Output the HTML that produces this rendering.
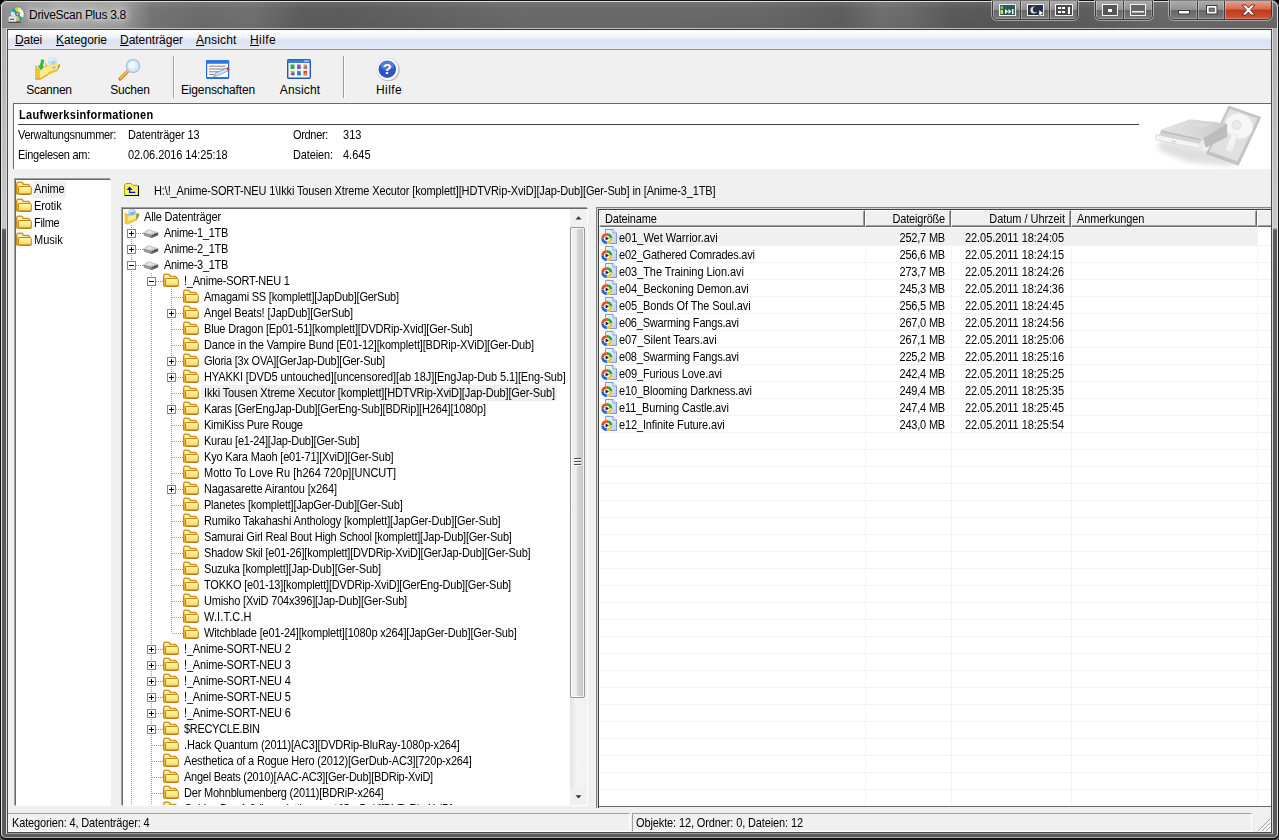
<!DOCTYPE html>
<html lang="de">
<head>
<meta charset="utf-8">
<title>DriveScan Plus 3.8</title>
<style>
*{box-sizing:border-box;margin:0;padding:0}
html,body{width:1279px;height:840px;overflow:hidden;background:#000}
body{font-family:"Liberation Sans",sans-serif;font-size:11px;color:#000;position:relative}
#win{position:absolute;left:0;top:0;width:1279px;height:840px;overflow:hidden;background:#5a5a5a;border-radius:7px 7px 0 0}
/* ---- glass frame ---- */
#glass{position:absolute;left:0;top:0;width:1279px;height:840px;border-radius:7px 7px 6px 6px;
 background:
 linear-gradient(to bottom,#b0b0b0 0,#c8c8c8 228px,#5c5c5c 230px,#5a5a5a 800px,#5c5c5c 840px)}
#titlebg{position:absolute;left:2px;top:2px;width:1275px;height:26px;
 background:linear-gradient(to right,#8e8e8e 0,#999 22px,#a6a6a6 60px,#a0a0a0 118px,#8a8a8a 134px,#757575 150px,#6c6c6c 200px,#707070 250px,#5d5d5d 300px,#5c5c5c 340px,#626262 420px,#6a6a6a 520px,#6a6a6a 640px,#676767 760px,#5e5e5e 840px,#6f6f6f 878px,#6b6b6b 905px,#5a5a5a 950px,#585858 1000px,#5e5e5e 1100px,#696969 1160px,#686868 1275px)}
#titleshade{position:absolute;left:2px;top:2px;width:1275px;height:26px;background:linear-gradient(to bottom,rgba(255,255,255,.08) 0,rgba(255,255,255,0) 30%,rgba(0,0,0,.03) 100%)}
#frameo{position:absolute;left:0;top:0;width:1279px;height:840px;border:1px solid #141414;border-bottom-width:2px;border-radius:7px 7px 6px 6px}
#framei{position:absolute;left:1px;top:1px;width:1277px;height:837px;border:1px solid #e2e2e2;border-top-color:#dcdcdc;border-bottom-color:#a8a8a8;border-radius:6px 6px 5px 5px}
#clientb{position:absolute;left:6px;top:28px;width:1267px;height:806px;border:1px solid #dadada;border-top-color:#c2c2c2;border-bottom-color:#9a9a9a}
#clientb2{position:absolute;left:7px;top:29px;width:1265px;height:804px;border:1px solid #4a4a4a;border-top-color:#343434}
#title{position:absolute;left:29px;top:7px;font-size:12px;line-height:16px;white-space:nowrap;color:#000;text-shadow:0 0 5px rgba(255,255,255,.9),0 0 9px rgba(255,255,255,.8),0 0 13px rgba(255,255,255,.6)}
#appicon{position:absolute;left:8px;top:6px}
/* caption button groups */
.cg{position:absolute;top:1px;height:19px;border:1px solid #3c3c3c;border-top:0;border-radius:0 0 5px 5px;overflow:hidden;box-shadow:0 0 0 1px rgba(255,255,255,.45)}
.cb{position:absolute;top:0;height:18px;border-right:1px solid #3c3c3c;background:linear-gradient(to bottom,#adadad 0,#909090 48%,#686868 52%,#7a7a7a 100%);box-shadow:inset 1px 0 0 rgba(255,255,255,.35),inset -1px -1px 0 rgba(255,255,255,.25)}
.cb.close{background:linear-gradient(to bottom,#e6a390 0,#d4694f 45%,#c0391c 50%,#d2553a 100%);border-right:0}
.cb svg{position:absolute;left:0;top:0}
/* ---- client ---- */
#client{position:absolute;left:8px;top:30px;width:1263px;height:802px;background:#f0f0f0;overflow:hidden}
#menubar{position:absolute;left:0;top:0;width:1263px;height:20px;background:linear-gradient(to bottom,#fdfdfe 0,#f3f5fb 35%,#dde3f3 55%,#dfe5f4 85%,#e9edf8 100%);border-bottom:1px solid #b6bccc}
#menubar:after{content:"";position:absolute;left:0;top:19px;width:100%;height:1px;background:#8e8e8e}
.mi{position:absolute;top:2px;font-size:12px;line-height:16px;white-space:nowrap}
.mi u{text-decoration:underline;text-underline-offset:1px}
#toolbar{position:absolute;left:0;top:20px;width:1263px;height:54px}
.tb{position:absolute;top:0;height:50px;text-align:center;font-size:12px;white-space:nowrap}
.tb span{position:absolute;left:-19px;right:-21px;top:33px;line-height:14px;text-align:center}
.tb svg{position:absolute;top:8px;left:50%;margin-left:-12px}
.tsep{position:absolute;top:26px;width:2px;height:42px;border-left:1px solid #a0a0a0;border-right:1px solid #fff}
/* info panel */
#info{position:absolute;left:5px;top:73px;width:1258px;height:66px;background:#fff;border-top:1px solid #696969;border-left:1px solid #696969}
#info h1{position:absolute;left:5px;top:4px;font-size:11px;font-weight:bold;line-height:14px;white-space:nowrap;transform:scaleY(1.1);transform-origin:0 10.600px}
#info .ln{position:absolute;left:4px;top:20px;width:1121px;height:1px;background:#404040}
.il{position:absolute;white-space:nowrap;line-height:14px;transform:scaleY(1.1);transform-origin:0 10.600px}
/* category list */
#cats{position:absolute;left:7px;top:149px;width:96px;height:627px;background:#fff;border:1px solid;border-color:#696969 #fff #fff #696969;box-shadow:-1px -1px 0 #a0a0a0}
.cat{position:absolute;left:0;height:17px;width:95px}
.cat span{position:absolute;left:17px;top:1px;line-height:14px;white-space:nowrap;padding:0 2px 0 1px;transform:scaleY(1.1);transform-origin:0 10.600px}
.cat.sel:before{content:"";position:absolute;left:17px;top:0;width:33px;height:17px;background:#f0f0f0}
.ic{position:absolute}
/* path bar */
#pathicon{position:absolute;left:116px;top:151px}
#path{position:absolute;left:146px;top:154px;line-height:14px;white-space:nowrap;transform:scaleY(1.1);transform-origin:0 10.600px}
/* tree */
#tree{position:absolute;left:114px;top:178px;width:466px;height:598px;background:#fff;border:1px solid;border-color:#696969 #fff #fff #696969;box-shadow:-1px -1px 0 #a0a0a0}
#treein{position:absolute;left:0;top:0;width:447px;height:596px;overflow:hidden}
.tl{position:absolute;line-height:14px;padding:1px 2px 1px 1px;white-space:nowrap;margin-left:-1px;transform:scaleY(1.1);transform-origin:0 11.600px}
.selbg{position:absolute;height:16px;background:#f0f0f0}
.dv{position:absolute;width:1px;background:repeating-linear-gradient(to bottom,#9a9a9a 0,#9a9a9a 1px,transparent 1px,transparent 2px)}
.dh{position:absolute;height:1px;background:repeating-linear-gradient(to right,#9a9a9a 0,#9a9a9a 1px,transparent 1px,transparent 2px)}
.pm{position:absolute;width:9px;height:9px;border:1px solid #848484;background:#fff}
.pm .ph{position:absolute;left:1px;top:3px;width:5px;height:1px;background:#000}
.pm .pv{position:absolute;left:3px;top:1px;width:1px;height:5px;background:#000}
/* scrollbar */
#sb{position:absolute;left:447px;top:0;width:17px;height:596px;background:#f0f0f0}
#sb .trk{position:absolute;left:0;top:17px;width:17px;height:562px;background:linear-gradient(to right,#e3e3e3,#f4f4f4 40%,#f0f0f0)}
#sb .thumb{position:absolute;left:0;top:18px;width:15px;height:471px;border:1px solid #979797;border-radius:2px;background:linear-gradient(to right,#f3f3f3 0,#ebebeb 42%,#d6d6d6 50%,#c6c6c6 100%);box-shadow:inset 0 0 0 1px rgba(255,255,255,.8)}
#sb svg{position:absolute;left:0}
/* file list */
#list{position:absolute;left:588px;top:177px;width:690px;height:601px;overflow:hidden;background:
 linear-gradient(#828282,#828282) 0 0/100% 1px no-repeat,
 linear-gradient(#828282,#828282) 0 0/1px 100% no-repeat,
 linear-gradient(#d4d4d4,#d4d4d4) 1px 1px/100% 1px no-repeat,
 linear-gradient(#d4d4d4,#d4d4d4) 1px 1px/1px 100% no-repeat,
 linear-gradient(#404040,#404040) 2px 2px/100% 1px no-repeat,
 linear-gradient(#404040,#404040) 2px 2px/1px 100% no-repeat,
 linear-gradient(#6a6a6a,#6a6a6a) 2px 599px/100% 1px no-repeat,
 linear-gradient(#f0f0f0,#f0f0f0) 0 600px/100% 1px no-repeat,
 #fff}
#lhead{position:absolute;left:3px;top:3px;width:686px;height:17px;background:#f0f0f0}
.hc{position:absolute;top:0;height:17px;background:#f0f0f0;border:1px solid;border-color:#fff #696969 #696969 #fff;box-shadow:inset -1px -1px 0 #a0a0a0;line-height:14px;padding:1px 5px 0 5px;white-space:nowrap}
.hc span,.sp span{display:inline-block;line-height:14px;transform:scaleY(1.1);transform-origin:0 10.600px}
.hc.r{text-align:right}
#rows{position:absolute;left:3px;top:22px;width:686px;height:577px;
 background:
 linear-gradient(#f2f2f2,#f2f2f2) 266px 0/1px 100% no-repeat,
 linear-gradient(#f2f2f2,#f2f2f2) 352px 0/1px 100% no-repeat,
 linear-gradient(#f2f2f2,#f2f2f2) 472px 0/1px 100% no-repeat,
 linear-gradient(#f2f2f2,#f2f2f2) 658px 0/1px 100% no-repeat,
 repeating-linear-gradient(to bottom,transparent 0,transparent 16px,#f2f2f2 16px,#f2f2f2 17px)}
.fr{position:absolute;left:0;width:658px;height:16px}
.fr.first{background:#f0f0f0;box-shadow:0 -1px 0 #f0f0f0}
.fr span{position:absolute;top:2px;line-height:14px;white-space:nowrap;transform:scaleY(1.1);transform-origin:0 10.600px}
.fn{left:20px}
.fs{right:312px;text-align:right}
.fd{right:193px;text-align:right}
/* status bar */
#status{position:absolute;left:0;top:783px;width:1263px;height:19px;background:#f0f0f0}
.sp{position:absolute;top:0;height:19px;border:1px solid;border-color:#a0a0a0 #fff #fff #a0a0a0;line-height:14px;padding:2px 0 0 3px;white-space:nowrap}
</style>
</head>
<body>
<svg width="0" height="0" style="position:absolute">
<defs>
<linearGradient id="fg" x1="0" y1="0" x2="0" y2="1"><stop offset="0" stop-color="#fffbb0"/><stop offset="1" stop-color="#f9d260"/></linearGradient>
<linearGradient id="pg" x1="0" y1="0" x2="1" y2="1"><stop offset="0" stop-color="#f4f8ff"/><stop offset="1" stop-color="#b7cdf3"/></linearGradient>
<linearGradient id="fb" x1="0" y1="0" x2="0" y2="1"><stop offset="0" stop-color="#f7d66a"/><stop offset="1" stop-color="#e9b838"/></linearGradient>
<g id="folder">
<path d="M.6 13.100V2.400c0-.8.5-1.300 1.200-1.300h4c.5 0 .8.200 1 .6l.6 1.600h5c.7 0 1.100.4 1.100 1.100v8.700z" fill="#f1b93a" stroke="#bd820c"/>
<path d="M1.600 5V2.700c0-.4.200-.6.600-.6h3.300l.9 2.200h5.500c.3 0 .5.200.5.500V5z" fill="#fdf1bd"/>
<rect x="2.600" y="5.500" width="12.700" height="7.700" rx="1" fill="url(#fg)" stroke="#c2860e"/>
<path d="M3.400 13.200h11c.6 0 .9-.4.900-1" fill="none" stroke="#9c6c0c" stroke-width=".8"/>
</g>
<g id="drive">
<path d="M.3 7.800L5.800 4.600 15.200 7.600 15 10.300 8.400 12.900 1.200 10.400z" fill="#8c8c8c"/>
<path d="M.3 7.800L5.800 4.600 15.200 7.600 8.600 10.100z" fill="#cfcfcf"/>
<path d="M3 7.400L6.200 5.600 10 6.800 6.800 8.400z" fill="#e9e9e9"/>
<path d="M.3 7.800L8.600 10.100 8.400 12.900 1.200 10.400z" fill="#9a9a9a"/>
<path d="M8.600 10.100L15.200 7.600 15 10.300 8.400 12.900z" fill="#5f5f66"/>
<ellipse cx="12.600" cy="9.600" rx="1.500" ry="1" fill="#4a4a78"/>
</g>
<g id="avi">
<path d="M4.500 .5h7.500l3.500 3.500v10.500h-11z" fill="url(#pg)" stroke="#7f9bd6"/>
<path d="M12 .5v3.500h3.500" fill="#fff" stroke="#7f9bd6"/>
<circle cx="5.800" cy="9.500" r="5.600" fill="#fff"/>
<path d="M5.800 3.900a5.600 5.600 0 0 1 5.600 5.600h-3A2.600 2.600 0 0 0 5.800 6.900z" fill="#35a12e"/>
<path d="M11.400 9.500a5.600 5.600 0 0 1-5.600 5.600v-3a2.600 2.600 0 0 0 2.600-2.600z" fill="#f5cb08"/>
<path d="M5.800 15.100A5.600 5.600 0 0 1 .2 9.500h3a2.600 2.600 0 0 0 2.600 2.600z" fill="#1f66dc"/>
<path d="M.2 9.500a5.600 5.600 0 0 1 5.600-5.600v3a2.600 2.600 0 0 0-2.600 2.600z" fill="#ee4a14"/>
<circle cx="5.800" cy="9.500" r="2.700" fill="#eef2fb"/>
<path d="M4.600 7.500l3.400 2-3.400 2z" fill="#1a1a2a"/>
</g>
<g id="rooticon">
<path d="M.7 3.200L4 5.500 12.500 4 15.200 4.800 14 8.500 12.300 11.600 3.600 15.600.9 14.400z" fill="#e9b92c"/>
<circle cx="8.200" cy="4.200" r="4.100" fill="#9cd2f8"/><circle cx="8.600" cy="4.800" r="2.300" fill="#6ab6f2"/><path d="M5 3.500c1-2 4-2.500 5.500-1.200-1.800.2-3.500.6-5.500 1.200z" fill="#eef8ff"/>
<path d="M.7 3.200L3.600 6.500 3.600 15.600.9 14.400z" fill="#f2c63a"/>
<path d="M3.600 7.600L12.500 5.300 12.300 11.600 3.600 15.600z" fill="#fdf08a"/>
<path d="M3.600 12.500L12.300 9 12.300 11.600 3.600 15.600z" fill="#f2cb44"/>
<path d="M12.500 5.300L15.200 4.800 14 8.500 12.300 11.600z" fill="#8f8442"/>
</g>
</defs>
</svg>
<div id="win">
 <div id="glass"></div>
 <div id="titlebg"></div>
 <div id="titleshade"></div>
 <div id="frameo"></div>
 <div id="framei"></div>
 <div id="clientb"></div>
 <div id="clientb2"></div>
 <svg id="appicon" width="17" height="18" viewBox="0 0 17 18">
  <circle cx="9.500" cy="8" r="6.800" fill="#f1f3ea" stroke="#6e6e6a" stroke-width=".8"/>
  <path d="M9.500 8L3.200 5.500A6.800 6.800 0 0 1 7 1.700z" fill="#2aa6a6"/>
  <path d="M9.500 8L7 1.700a6.800 6.800 0 0 1 3.600-.4z" fill="#b6e34a"/>
  <path d="M9.500 8l1.100-6.700a6.800 6.800 0 0 1 2.500 1z" fill="#f2ea9a"/>
  <path d="M9.500 8l5.500 4a6.800 6.800 0 0 1-3.500 2.500z" fill="#23a89a"/>
  <path d="M9.500 8l2 6.500a6.800 6.800 0 0 1-2.700.3z" fill="#f0b630"/>
  <path d="M9.500 8L3.200 5.500a6.800 6.800 0 0 0-.3 4z" fill="#c9eef0"/>
  <circle cx="9.500" cy="8" r="2" fill="#a9b0a8" stroke="#4d5a52" stroke-width=".9"/>
  <path d="M.5 16.300V11.500l1.500-1.500h5.500l1 1.800v4.500z" fill="#e4ece2" stroke="#9aa39a" stroke-width=".5"/>
  <rect x="1.800" y="12.800" width="4.500" height="1" fill="#3c463c"/>
  <rect x=".3" y="15.800" width="12.500" height="1" fill="#33363a"/>
 </svg>
 <div id="title" style="letter-spacing:-0.28px">DriveScan Plus 3.8</div>

 <div class="cg" style="left:992px;width:86px">
  <div class="cb" style="left:0;width:28px"><svg width="28" height="19"><rect x="6.500" y="3.500" width="16" height="11" fill="#2d5a5a" stroke="#f4f4f4"/><rect x="7.500" y="5" width="2.500" height="3" fill="#6cc070"/><rect x="7.500" y="9" width="2.500" height="4" fill="#e0d850"/><path d="M12 8l3 2.500-3 2.500zM15.500 8l3 2.500-3 2.500zM19 8v5h1.500V8z" fill="#fff"/></svg></div>
  <div class="cb" style="left:28px;width:29px"><svg width="29" height="19"><rect x="6.500" y="3.500" width="16" height="11" fill="#23314a" stroke="#f4f4f4"/><circle cx="13" cy="9" r="3.600" fill="#e6e2c0"/><circle cx="14.800" cy="8.600" r="3" fill="#23314a"/><path d="M18 9l4.500 3-4.500 3z" fill="#fff" stroke="#444" stroke-width=".5"/></svg></div>
  <div class="cb" style="left:57px;width:28px;border-right:0"><svg width="28" height="19"><rect x="5.500" y="3.500" width="17" height="11" fill="#4a4a4a" stroke="#f4f4f4"/><rect x="8" y="6" width="3" height="2" fill="#fff"/><rect x="12" y="6" width="3" height="2" fill="#fff"/><rect x="8" y="10" width="3" height="2" fill="#fff"/><rect x="12" y="10" width="3" height="2" fill="#fff"/><path d="M18 6h2v7h-2z" fill="#fff"/></svg></div>
 </div>
 <div class="cg" style="left:1095px;width:58px">
  <div class="cb" style="left:0;width:28px"><svg width="28" height="19"><rect x="6.500" y="3.500" width="15" height="11" fill="#555" stroke="#f4f4f4"/><rect x="12" y="8" width="4" height="3" fill="#fff"/></svg></div>
  <div class="cb" style="left:28px;width:28px;border-right:0"><svg width="28" height="19"><rect x="6.500" y="3.500" width="15" height="11" fill="#666" stroke="#f4f4f4"/><rect x="8" y="10" width="12" height="1.500" fill="#f4f4f4"/></svg></div>
 </div>
 <div class="cg" style="left:1169px;width:103px">
  <div class="cb" style="left:0;width:28px"><svg width="28" height="19"><rect x="8.500" y="9.500" width="11" height="3.500" fill="#fff" stroke="#3a3a3a" stroke-width="1"/></svg></div>
  <div class="cb" style="left:28px;width:27px"><svg width="27" height="19"><rect x="8.500" y="4.500" width="10.500" height="8.500" fill="#fff" stroke="#3a3a3a"/><rect x="11" y="7" width="5.500" height="3.500" fill="#777" stroke="#3a3a3a" stroke-width=".6"/></svg></div>
  <div class="cb close" style="left:55px;width:47px"><svg width="47" height="19"><path d="M17 5h4l2.500 3 2.500-3h4l-4.500 5 4.500 5h-4l-2.500-3-2.500 3h-4l4.500-5z" fill="#fff" stroke="#5a2a20" stroke-width=".9" transform="translate(0 -1)"/></svg></div>
 </div>

 <div id="client">
  <div id="menubar">
   <span class="mi" style="letter-spacing:-0.203px;left:7px"><u>D</u>atei</span>
   <span class="mi" style="letter-spacing:-0.042px;left:48px"><u>K</u>ategorie</span>
   <span class="mi" style="letter-spacing:-0.034px;left:112px"><u>D</u>atenträger</span>
   <span class="mi" style="letter-spacing:0.163px;left:188px"><u>A</u>nsicht</span>
   <span class="mi" style="letter-spacing:0.397px;left:242px"><u>H</u>ilfe</span>
  </div>
  <div id="toolbar">
   <div class="tb" style="left:16px;width:48px"><svg width="26" height="24" viewBox="35 57 26 24" style="margin-left:-13px;top:7px">
     <circle cx="52.600" cy="61.800" r="4.500" fill="#c2e0f7"/><path d="M49 61c1-2.500 4.500-3.500 6.500-1.500-2 .3-4.200.8-6.500 1.500z" fill="#f0f8ff"/><circle cx="53.500" cy="62.800" r="1.800" fill="#a4cdf2"/>
     <path d="M45 62L47.500 65.200 59 64 60 65.500 57 71.200 48 74.800 45 71.800z" fill="#efc636"/>
     <path d="M47.500 65.200L59 64 57 71.200 48 74.800z" fill="#fbe880"/>
     <path d="M47.800 72.300L57.600 69 57 71.200 48 74.800z" fill="#eec43c"/>
     <path d="M59 64L60 65.500 57 71.200z" fill="#8c8040"/>
     <ellipse cx="54" cy="67.500" rx="1.700" ry="1.300" fill="#a9b6f2"/>
     <path d="M35 64.500L40.300 70 40.300 79.700 35 79.500z" fill="#efc434"/>
     <path d="M40.300 70L47.800 66.200 48.200 75.200 40.300 79.700z" fill="#fcec90"/>
     <path d="M35 78L40.300 78.200 48.200 73.600 48.200 75.200 40.300 79.700 35 79.500z" fill="#d9aa2a"/>
     <path d="M41.600 59.500L44 60.300 42.600 66.500 44.200 66.900 40.600 70 38.200 65.500 40 66z" fill="#36c024" stroke="#219a16" stroke-width=".4"/>
   </svg><span style="letter-spacing:-0.268px">Scannen</span></div>
   <div class="tb" style="left:97px;width:48px"><svg width="24" height="24" viewBox="0 0 24 24">
     <path d="M3 21l9-9" stroke="#d98a2c" stroke-width="3.400" stroke-linecap="round"/><path d="M3.500 20l8-8" stroke="#f7c46c" stroke-width="1.200" stroke-linecap="round"/>
     <circle cx="16" cy="8" r="6.500" fill="#d7ecfb" stroke="#a9c9e6" stroke-width="1.600"/><circle cx="15" cy="7" r="3.500" fill="#f1f9ff"/>
   </svg><span style="letter-spacing:-0.201px">Suchen</span></div>
   <div class="tb" style="left:185px;width:48px"><svg width="25" height="24" viewBox="0 0 25 24">
     <rect x="1.600" y="2.800" width="22" height="17.600" rx=".8" fill="#fff" stroke="#1f68d8" stroke-width="1.200"/><rect x="1" y="2.200" width="23.200" height="3.600" rx=".8" fill="#2a74e4"/><rect x="1.600" y="19" width="22" height="1.600" fill="#2a74e4"/>
     <path d="M4 8.200h16.500M4 11h16.500M4 13.800h12M4 16.400h5" stroke="#707070" stroke-width=".9"/>
     <path d="M8.500 18.600l2.200-3.600 11-5 2 2.600-11 5z" fill="#cfe2fa" stroke="#5b86c4" stroke-width=".7"/><path d="M21 10.300l1.800-1 2 2.600-1.500 1z" fill="#e8301c"/><path d="M8.500 18.600l3-.5-1.400-2.200z" fill="#f0a428"/>
   </svg><span style="letter-spacing:-0.159px">Eigenschaften</span></div>
   <div class="tb" style="left:267px;width:48px"><svg width="24" height="24" viewBox="0 0 24 24">
     <rect x=".7" y="1.700" width="22.600" height="18.600" rx="1" fill="#f4f7fd" stroke="#2656b0" stroke-width="1.400"/><rect x=".7" y="1.700" width="22.600" height="3.300" fill="#3a78dc"/><rect x="17" y="2.300" width="5" height="1.600" fill="#9cc0f4"/>
     <rect x="3.500" y="6.500" width="4" height="4.500" fill="#3aa83a"/><rect x="10" y="6.500" width="3.600" height="4.500" fill="#d8503a"/><rect x="11" y="8" width="2.600" height="3" fill="#7a58c8"/><rect x="16.500" y="6.500" width="3.600" height="4.500" fill="#e8982c"/><rect x="17.500" y="8.500" width="2.600" height="2.500" fill="#8a68c8"/>
     <rect x="3.500" y="12.800" width="4" height="4.500" fill="#f0b428"/><rect x="4.500" y="14.500" width="3" height="2.800" fill="#3a68e0"/><rect x="10" y="12.800" width="3.600" height="4.500" fill="#22a890"/><rect x="11" y="14.500" width="2.600" height="2.800" fill="#2a70d8"/><rect x="16.500" y="12.800" width="3.600" height="4.500" fill="#e0442c"/><rect x="17.500" y="14.800" width="2.600" height="2.500" fill="#f0902c"/>
   </svg><span style="letter-spacing:0.163px">Ansicht</span></div>
   <div class="tb" style="left:356px;width:48px"><svg width="24" height="24" viewBox="0 0 24 24">
     <circle cx="12.300" cy="11.800" r="11.300" fill="#8a8a8a"/><circle cx="11.700" cy="11.300" r="11" fill="#fbfbfd"/><circle cx="12" cy="11.500" r="11.300" fill="none" stroke="#d8dce8" stroke-width=".6"/>
     <circle cx="11.300" cy="11.200" r="8.700" fill="#2d55c6"/><ellipse cx="11.300" cy="7.500" rx="6.800" ry="4.500" fill="#5f86ea" opacity=".75"/>
     <text x="11.300" y="16.300" text-anchor="middle" font-family="Liberation Sans, sans-serif" font-weight="bold" font-size="14.500" fill="#fff">?</text>
   </svg><span style="letter-spacing:0.397px">Hilfe</span></div>
  </div>
  <div class="tsep" style="left:165px"></div>
  <div class="tsep" style="left:335px"></div>

  <div id="info">
   <h1 style="letter-spacing:0.307px">Laufwerksinformationen</h1>
   <div class="ln"></div>
   <span class="il" style="letter-spacing:-0.296px;left:4px;top:24px">Verwaltungsnummer:</span>
   <span class="il" style="letter-spacing:-0.135px;left:114px;top:24px">Datenträger 13</span>
   <span class="il" style="letter-spacing:-0.328px;left:279px;top:24px">Ordner:</span>
   <span class="il" style="letter-spacing:0.047px;left:329px;top:24px">313</span>
   <span class="il" style="letter-spacing:-0.273px;left:4px;top:44px">Eingelesen am:</span>
   <span class="il" style="letter-spacing:-0.076px;left:114px;top:44px">02.06.2016 14:25:18</span>
   <span class="il" style="letter-spacing:-0.123px;left:279px;top:44px">Dateien:</span>
   <span class="il" style="letter-spacing:-0.006px;left:329px;top:44px">4.645</span>
   <svg style="position:absolute;left:1136px;top:0" width="116" height="65" viewBox="1150 104 116 65">
    <defs><filter id="bl" x="-10%" y="-10%" width="120%" height="120%"><feGaussianBlur stdDeviation=".7"/></filter><filter id="bl2" x="-20%" y="-20%" width="140%" height="140%"><feGaussianBlur stdDeviation="2.500"/></filter>
    <linearGradient id="tg" x1="0" y1="0" x2="1" y2="0"><stop offset="0" stop-color="#e2e2e2"/><stop offset="1" stop-color="#c4c4c4"/></linearGradient></defs>
    <path d="M1160 140l44 9 34 14-10 3-40-4-30-12z" fill="#d8d8d8" filter="url(#bl2)" opacity=".8"/>
    <g filter="url(#bl)" opacity=".88">
     <path d="M1228.600 105.400L1261.400 117.100 1238.600 165.700 1205.800 154z" fill="#bdbdbd"/>
     <path d="M1229.600 108.400L1257.600 118.400 1237.400 161.500 1209.500 151.500z" fill="#dcdcdc"/>
     <ellipse cx="1239" cy="126" rx="14" ry="12.500" fill="#f7f7f7" stroke="#e4e4e4" stroke-width="1" transform="rotate(20 1239 126)"/>
     <circle cx="1236.500" cy="125" r="4.600" fill="#e6e6e6" stroke="#d6d6d6" stroke-width=".8"/>
     <path d="M1231.500 133l6 2.500-5 16-6.500-2.500z" fill="#f3f3f3" stroke="#d8d8d8" stroke-width=".6"/>
     <circle cx="1230" cy="148" r="3.500" fill="#ececec"/>
     <path d="M1190 119.300L1227.100 123.600 1202.900 137.900 1161.400 129.300z" fill="url(#tg)"/>
     <path d="M1197 123l12 1.500-5 3-12.500-1.700z" fill="#d9d9d9"/>
     <path d="M1202.900 137.900L1227.100 123.600 1227.100 137.100 1205.700 148z" fill="#b4b4b4"/>
     <path d="M1161.400 129.300L1202.900 137.900 1204 147.500 1158 138z" fill="#cfcfcf"/>
     <path d="M1155.700 134.500L1199.500 143.500 1200.500 149 1156 139.800z" fill="#f4f4f4" stroke="#cdcdcd" stroke-width=".7"/>
     <path d="M1161 131.500l40 8.300" stroke="#a8a8a8" stroke-width=".9" fill="none"/>
     <path d="M1199.500 143.500l3.500-4.500 1 8.500-3.500 1.500z" fill="#e9e9e9"/>
     <rect x="1172" y="140.500" width="4" height="1.300" fill="#c9c9c9" transform="rotate(11 1172 140)"/>
    </g>
   </svg>
  </div>

  <div id="cats">
   <div class="cat sel" style="top:1px"><svg class="ic" style="left:0;top:0" width="16" height="16" viewBox="0 0 16 16"><use href="#folder"/></svg><span style="letter-spacing:-0.158px">Anime</span></div>
   <div class="cat" style="top:18px"><svg class="ic" style="left:0;top:0" width="16" height="16" viewBox="0 0 16 16"><use href="#folder"/></svg><span style="letter-spacing:-0.087px">Erotik</span></div>
   <div class="cat" style="top:35px"><svg class="ic" style="left:0;top:0" width="16" height="16" viewBox="0 0 16 16"><use href="#folder"/></svg><span style="letter-spacing:-0.298px">Filme</span></div>
   <div class="cat" style="top:52px"><svg class="ic" style="left:0;top:0" width="16" height="16" viewBox="0 0 16 16"><use href="#folder"/></svg><span style="letter-spacing:0.013px">Musik</span></div>
  </div>

  <svg id="pathicon" width="16" height="16" viewBox="124 181 16 16"><path d="M124.500 195.200V185l1.500-1.500h5l1.500 1.800h5.700v9.900z" fill="#f7ef6e"/><path d="M124.600 195V185l1.500-1.500h5l1.500 1.800h5.400" fill="none" stroke="#a4a400" stroke-width="1"/><path d="M138.500 185.800v9.700H124.600" fill="none" stroke="#000" stroke-width="1.100"/><path d="M129.600 186.600l3 3.300h-6z" fill="#0a0ae0"/><path d="M129 189.500h1.300v2.300h5v1.300H129z" fill="#0a0ae0"/></svg>
  <div id="path" style="letter-spacing:-0.124px">H:\!_Anime-SORT-NEU 1\Ikki Tousen Xtreme Xecutor [komplett][HDTVRip-XviD][Jap-Dub][Ger-Sub] in [Anime-3_1TB]</div>

  <div id="tree">
   <div id="treein">
<i class="dv" style="left:8px;top:16px;height:615px"></i>
<i class="dv" style="left:28px;top:64px;height:567px"></i>
<i class="dv" style="left:48px;top:80px;height:344px"></i>
<svg class="ic" style="left:1px;top:0px" width="16" height="16" viewBox="0 0 16 16"><use href="#rooticon"/></svg>
<span class="tl" style="left:21px;top:0px;letter-spacing:-0.163px">Alle Datenträger</span>
<i class="dh" style="left:9px;top:24px;width:11px"></i>
<span class="pm" style="left:4px;top:20px"><b class="ph"></b><b class="pv"></b></span>
<svg class="ic" style="left:20px;top:16px" width="16" height="16" viewBox="0 0 16 16"><use href="#drive"/></svg>
<span class="tl" style="left:41px;top:16px;letter-spacing:-0.297px">Anime-1_1TB</span>
<i class="dh" style="left:9px;top:40px;width:11px"></i>
<span class="pm" style="left:4px;top:36px"><b class="ph"></b><b class="pv"></b></span>
<svg class="ic" style="left:20px;top:32px" width="16" height="16" viewBox="0 0 16 16"><use href="#drive"/></svg>
<span class="tl" style="left:41px;top:32px;letter-spacing:-0.297px">Anime-2_1TB</span>
<i class="dh" style="left:9px;top:56px;width:11px"></i>
<span class="pm" style="left:4px;top:52px"><b class="ph"></b></span>
<svg class="ic" style="left:20px;top:48px" width="16" height="16" viewBox="0 0 16 16"><use href="#drive"/></svg>
<span class="tl" style="left:41px;top:48px;letter-spacing:-0.297px">Anime-3_1TB</span>
<i class="dh" style="left:29px;top:72px;width:11px"></i>
<span class="pm" style="left:24px;top:68px"><b class="ph"></b></span>
<svg class="ic" style="left:40px;top:64px" width="16" height="16" viewBox="0 0 16 16"><use href="#folder"/></svg>
<span class="tl" style="left:61px;top:64px;letter-spacing:-0.235px">!_Anime-SORT-NEU 1</span>
<i class="dh" style="left:49px;top:88px;width:11px"></i>
<svg class="ic" style="left:60px;top:80px" width="16" height="16" viewBox="0 0 16 16"><use href="#folder"/></svg>
<span class="tl" style="left:81px;top:80px;letter-spacing:-0.221px">Amagami SS [komplett][JapDub][GerSub]</span>
<i class="dh" style="left:49px;top:104px;width:11px"></i>
<span class="pm" style="left:44px;top:100px"><b class="ph"></b><b class="pv"></b></span>
<svg class="ic" style="left:60px;top:96px" width="16" height="16" viewBox="0 0 16 16"><use href="#folder"/></svg>
<span class="tl" style="left:81px;top:96px;letter-spacing:-0.155px">Angel Beats! [JapDub][GerSub]</span>
<i class="dh" style="left:49px;top:120px;width:11px"></i>
<svg class="ic" style="left:60px;top:112px" width="16" height="16" viewBox="0 0 16 16"><use href="#folder"/></svg>
<span class="tl" style="left:81px;top:112px;letter-spacing:-0.187px">Blue Dragon [Ep01-51][komplett][DVDRip-Xvid][Ger-Sub]</span>
<i class="dh" style="left:49px;top:136px;width:11px"></i>
<svg class="ic" style="left:60px;top:128px" width="16" height="16" viewBox="0 0 16 16"><use href="#folder"/></svg>
<span class="tl" style="left:81px;top:128px;letter-spacing:-0.167px">Dance in the Vampire Bund [E01-12][komplett][BDRip-XViD][Ger-Dub]</span>
<i class="dh" style="left:49px;top:152px;width:11px"></i>
<span class="pm" style="left:44px;top:148px"><b class="ph"></b><b class="pv"></b></span>
<svg class="ic" style="left:60px;top:144px" width="16" height="16" viewBox="0 0 16 16"><use href="#folder"/></svg>
<span class="tl" style="left:81px;top:144px;letter-spacing:-0.234px">Gloria [3x OVA][GerJap-Dub][Ger-Sub]</span>
<i class="dh" style="left:49px;top:168px;width:11px"></i>
<span class="pm" style="left:44px;top:164px"><b class="ph"></b><b class="pv"></b></span>
<svg class="ic" style="left:60px;top:160px" width="16" height="16" viewBox="0 0 16 16"><use href="#folder"/></svg>
<span class="tl" style="left:81px;top:160px;letter-spacing:-0.117px">HYAKKI [DVD5 untouched][uncensored][ab 18J][EngJap-Dub 5.1][Eng-Sub]</span>
<i class="dh" style="left:49px;top:184px;width:11px"></i>
<svg class="ic" style="left:60px;top:176px" width="16" height="16" viewBox="0 0 16 16"><use href="#folder"/></svg>
<i class="selbg" style="left:78px;top:176px;width:356px"></i>
<span class="tl" style="left:81px;top:176px;letter-spacing:-0.13px">Ikki Tousen Xtreme Xecutor [komplett][HDTVRip-XviD][Jap-Dub][Ger-Sub]</span>
<i class="dh" style="left:49px;top:200px;width:11px"></i>
<span class="pm" style="left:44px;top:196px"><b class="ph"></b><b class="pv"></b></span>
<svg class="ic" style="left:60px;top:192px" width="16" height="16" viewBox="0 0 16 16"><use href="#folder"/></svg>
<span class="tl" style="left:81px;top:192px;letter-spacing:-0.186px">Karas [GerEngJap-Dub][GerEng-Sub][BDRip][H264][1080p]</span>
<i class="dh" style="left:49px;top:216px;width:11px"></i>
<svg class="ic" style="left:60px;top:208px" width="16" height="16" viewBox="0 0 16 16"><use href="#folder"/></svg>
<span class="tl" style="left:81px;top:208px;letter-spacing:-0.276px">KimiKiss Pure Rouge</span>
<i class="dh" style="left:49px;top:232px;width:11px"></i>
<svg class="ic" style="left:60px;top:224px" width="16" height="16" viewBox="0 0 16 16"><use href="#folder"/></svg>
<span class="tl" style="left:81px;top:224px;letter-spacing:-0.217px">Kurau [e1-24][Jap-Dub][Ger-Sub]</span>
<i class="dh" style="left:49px;top:248px;width:11px"></i>
<svg class="ic" style="left:60px;top:240px" width="16" height="16" viewBox="0 0 16 16"><use href="#folder"/></svg>
<span class="tl" style="left:81px;top:240px;letter-spacing:-0.183px">Kyo Kara Maoh [e01-71][XviD][Ger-Sub]</span>
<i class="dh" style="left:49px;top:264px;width:11px"></i>
<svg class="ic" style="left:60px;top:256px" width="16" height="16" viewBox="0 0 16 16"><use href="#folder"/></svg>
<span class="tl" style="left:81px;top:256px;letter-spacing:0.009px">Motto To Love Ru [h264 720p][UNCUT]</span>
<i class="dh" style="left:49px;top:280px;width:11px"></i>
<span class="pm" style="left:44px;top:276px"><b class="ph"></b><b class="pv"></b></span>
<svg class="ic" style="left:60px;top:272px" width="16" height="16" viewBox="0 0 16 16"><use href="#folder"/></svg>
<span class="tl" style="left:81px;top:272px;letter-spacing:-0.132px">Nagasarette Airantou [x264]</span>
<i class="dh" style="left:49px;top:296px;width:11px"></i>
<svg class="ic" style="left:60px;top:288px" width="16" height="16" viewBox="0 0 16 16"><use href="#folder"/></svg>
<span class="tl" style="left:81px;top:288px;letter-spacing:-0.219px">Planetes [komplett][JapGer-Dub][Ger-Sub]</span>
<i class="dh" style="left:49px;top:312px;width:11px"></i>
<svg class="ic" style="left:60px;top:304px" width="16" height="16" viewBox="0 0 16 16"><use href="#folder"/></svg>
<span class="tl" style="left:81px;top:304px;letter-spacing:-0.155px">Rumiko Takahashi Anthology [komplett][JapGer-Dub][Ger-Sub]</span>
<i class="dh" style="left:49px;top:328px;width:11px"></i>
<svg class="ic" style="left:60px;top:320px" width="16" height="16" viewBox="0 0 16 16"><use href="#folder"/></svg>
<span class="tl" style="left:81px;top:320px;letter-spacing:-0.211px">Samurai Girl Real Bout High School [komplett][Jap-Dub][Ger-Sub]</span>
<i class="dh" style="left:49px;top:344px;width:11px"></i>
<svg class="ic" style="left:60px;top:336px" width="16" height="16" viewBox="0 0 16 16"><use href="#folder"/></svg>
<span class="tl" style="left:81px;top:336px;letter-spacing:-0.181px">Shadow Skil [e01-26][komplett][DVDRip-XviD][GerJap-Dub][Ger-Sub]</span>
<i class="dh" style="left:49px;top:360px;width:11px"></i>
<svg class="ic" style="left:60px;top:352px" width="16" height="16" viewBox="0 0 16 16"><use href="#folder"/></svg>
<span class="tl" style="left:81px;top:352px;letter-spacing:-0.172px">Suzuka [komplett][Jap-Dub][Ger-Sub]</span>
<i class="dh" style="left:49px;top:376px;width:11px"></i>
<svg class="ic" style="left:60px;top:368px" width="16" height="16" viewBox="0 0 16 16"><use href="#folder"/></svg>
<span class="tl" style="left:81px;top:368px;letter-spacing:-0.185px">TOKKO [e01-13][komplett][DVDRip-XviD][GerEng-Dub][Ger-Sub]</span>
<i class="dh" style="left:49px;top:392px;width:11px"></i>
<svg class="ic" style="left:60px;top:384px" width="16" height="16" viewBox="0 0 16 16"><use href="#folder"/></svg>
<span class="tl" style="left:81px;top:384px;letter-spacing:-0.188px">Umisho [XviD 704x396][Jap-Dub][Ger-Sub]</span>
<i class="dh" style="left:49px;top:408px;width:11px"></i>
<svg class="ic" style="left:60px;top:400px" width="16" height="16" viewBox="0 0 16 16"><use href="#folder"/></svg>
<span class="tl" style="left:81px;top:400px;letter-spacing:0.139px">W.I.T.C.H</span>
<i class="dh" style="left:49px;top:424px;width:11px"></i>
<svg class="ic" style="left:60px;top:416px" width="16" height="16" viewBox="0 0 16 16"><use href="#folder"/></svg>
<span class="tl" style="left:81px;top:416px;letter-spacing:-0.165px">Witchblade [e01-24][komplett][1080p x264][JapGer-Dub][Ger-Sub]</span>
<i class="dh" style="left:29px;top:440px;width:11px"></i>
<span class="pm" style="left:24px;top:436px"><b class="ph"></b><b class="pv"></b></span>
<svg class="ic" style="left:40px;top:432px" width="16" height="16" viewBox="0 0 16 16"><use href="#folder"/></svg>
<span class="tl" style="left:61px;top:432px;letter-spacing:-0.174px">!_Anime-SORT-NEU 2</span>
<i class="dh" style="left:29px;top:456px;width:11px"></i>
<span class="pm" style="left:24px;top:452px"><b class="ph"></b><b class="pv"></b></span>
<svg class="ic" style="left:40px;top:448px" width="16" height="16" viewBox="0 0 16 16"><use href="#folder"/></svg>
<span class="tl" style="left:61px;top:448px;letter-spacing:-0.174px">!_Anime-SORT-NEU 3</span>
<i class="dh" style="left:29px;top:472px;width:11px"></i>
<span class="pm" style="left:24px;top:468px"><b class="ph"></b><b class="pv"></b></span>
<svg class="ic" style="left:40px;top:464px" width="16" height="16" viewBox="0 0 16 16"><use href="#folder"/></svg>
<span class="tl" style="left:61px;top:464px;letter-spacing:-0.174px">!_Anime-SORT-NEU 4</span>
<i class="dh" style="left:29px;top:488px;width:11px"></i>
<span class="pm" style="left:24px;top:484px"><b class="ph"></b><b class="pv"></b></span>
<svg class="ic" style="left:40px;top:480px" width="16" height="16" viewBox="0 0 16 16"><use href="#folder"/></svg>
<span class="tl" style="left:61px;top:480px;letter-spacing:-0.174px">!_Anime-SORT-NEU 5</span>
<i class="dh" style="left:29px;top:504px;width:11px"></i>
<span class="pm" style="left:24px;top:500px"><b class="ph"></b><b class="pv"></b></span>
<svg class="ic" style="left:40px;top:496px" width="16" height="16" viewBox="0 0 16 16"><use href="#folder"/></svg>
<span class="tl" style="left:61px;top:496px;letter-spacing:-0.174px">!_Anime-SORT-NEU 6</span>
<i class="dh" style="left:29px;top:520px;width:11px"></i>
<span class="pm" style="left:24px;top:516px"><b class="ph"></b><b class="pv"></b></span>
<svg class="ic" style="left:40px;top:512px" width="16" height="16" viewBox="0 0 16 16"><use href="#folder"/></svg>
<span class="tl" style="left:61px;top:512px;letter-spacing:-0.332px">$RECYCLE.BIN</span>
<i class="dh" style="left:29px;top:536px;width:11px"></i>
<svg class="ic" style="left:40px;top:528px" width="16" height="16" viewBox="0 0 16 16"><use href="#folder"/></svg>
<span class="tl" style="left:61px;top:528px;letter-spacing:-0.178px">.Hack Quantum (2011)[AC3][DVDRip-BluRay-1080p-x264]</span>
<i class="dh" style="left:29px;top:552px;width:11px"></i>
<svg class="ic" style="left:40px;top:544px" width="16" height="16" viewBox="0 0 16 16"><use href="#folder"/></svg>
<span class="tl" style="left:61px;top:544px;letter-spacing:-0.182px">Aesthetica of a Rogue Hero (2012)[GerDub-AC3][720p-x264]</span>
<i class="dh" style="left:29px;top:568px;width:11px"></i>
<svg class="ic" style="left:40px;top:560px" width="16" height="16" viewBox="0 0 16 16"><use href="#folder"/></svg>
<span class="tl" style="left:61px;top:560px;letter-spacing:-0.253px">Angel Beats (2010)[AAC-AC3][Ger-Dub][BDRip-XviD]</span>
<i class="dh" style="left:29px;top:584px;width:11px"></i>
<svg class="ic" style="left:40px;top:576px" width="16" height="16" viewBox="0 0 16 16"><use href="#folder"/></svg>
<span class="tl" style="left:61px;top:576px;letter-spacing:-0.207px">Der Mohnblumenberg (2011)[BDRiP-x264]</span>
<i class="dh" style="left:29px;top:600px;width:11px"></i>
<svg class="ic" style="left:40px;top:592px" width="16" height="16" viewBox="0 0 16 16"><use href="#folder"/></svg>
<span class="tl" style="left:61px;top:592px;letter-spacing:-0.372px">Golden Boy 1-6 (komplett) - uncut [GerDub][DVD-Rip-XviD]</span>
   </div>
   <div id="sb">
    <div class="trk"></div>
    <svg style="top:0" width="17" height="17"><path d="M5.500 10.600L8.500 7.200l3 3.400z" fill="#333"/></svg>
    <div class="thumb"><svg style="left:3px;top:230px" width="8" height="9"><path d="M0 .5h7M0 3.500h7M0 6.500h7" stroke="#4a4a4a" stroke-width="1"/><path d="M0 1.500h7M0 4.500h7M0 7.500h7" stroke="#fff" stroke-width="1"/></svg></div>
    <svg style="top:579px" width="17" height="17"><path d="M5.500 7.200L8.500 10.600l3-3.400z" fill="#333"/></svg>
   </div>
  </div>

  <div id="list">
   <div id="lhead">
    <div class="hc" style="left:0;width:266px"><span style="letter-spacing:-0.178px">Dateiname</span></div>
    <div class="hc r" style="left:266px;width:86px"><span style="letter-spacing:-0.202px">Dateigröße</span></div>
    <div class="hc r" style="left:352px;width:120px"><span style="letter-spacing:-0.048px">Datum / Uhrzeit</span></div>
    <div class="hc" style="left:472px;width:186px"><span style="letter-spacing:-0.118px">Anmerkungen</span></div>
    <div class="hc" style="left:658px;width:40px"></div>
   </div>
   <div id="rows">
<div class="fr first" style="top:0px"><svg class="ic" style="left:2px;top:0px" width="16" height="16" viewBox="0 0 16 16"><use href="#avi"/></svg><span class="fn" style="letter-spacing:-0.013px">e01_Wet Warrior.avi</span><span class="fs" style="letter-spacing:-0.199px">252,7 MB</span><span class="fd" style="letter-spacing:-0.059px">22.05.2011 18:24:05</span></div>
<div class="fr" style="top:17px"><svg class="ic" style="left:2px;top:0px" width="16" height="16" viewBox="0 0 16 16"><use href="#avi"/></svg><span class="fn" style="letter-spacing:-0.222px">e02_Gathered Comrades.avi</span><span class="fs" style="letter-spacing:-0.199px">256,6 MB</span><span class="fd" style="letter-spacing:-0.059px">22.05.2011 18:24:15</span></div>
<div class="fr" style="top:34px"><svg class="ic" style="left:2px;top:0px" width="16" height="16" viewBox="0 0 16 16"><use href="#avi"/></svg><span class="fn" style="letter-spacing:-0.072px">e03_The Training Lion.avi</span><span class="fs" style="letter-spacing:-0.199px">273,7 MB</span><span class="fd" style="letter-spacing:-0.059px">22.05.2011 18:24:26</span></div>
<div class="fr" style="top:51px"><svg class="ic" style="left:2px;top:0px" width="16" height="16" viewBox="0 0 16 16"><use href="#avi"/></svg><span class="fn" style="letter-spacing:-0.078px">e04_Beckoning Demon.avi</span><span class="fs" style="letter-spacing:-0.199px">245,3 MB</span><span class="fd" style="letter-spacing:-0.059px">22.05.2011 18:24:36</span></div>
<div class="fr" style="top:68px"><svg class="ic" style="left:2px;top:0px" width="16" height="16" viewBox="0 0 16 16"><use href="#avi"/></svg><span class="fn" style="letter-spacing:-0.11px">e05_Bonds Of The Soul.avi</span><span class="fs" style="letter-spacing:-0.199px">256,5 MB</span><span class="fd" style="letter-spacing:-0.059px">22.05.2011 18:24:45</span></div>
<div class="fr" style="top:85px"><svg class="ic" style="left:2px;top:0px" width="16" height="16" viewBox="0 0 16 16"><use href="#avi"/></svg><span class="fn" style="letter-spacing:-0.197px">e06_Swarming Fangs.avi</span><span class="fs" style="letter-spacing:-0.199px">267,0 MB</span><span class="fd" style="letter-spacing:-0.059px">22.05.2011 18:24:56</span></div>
<div class="fr" style="top:102px"><svg class="ic" style="left:2px;top:0px" width="16" height="16" viewBox="0 0 16 16"><use href="#avi"/></svg><span class="fn" style="letter-spacing:-0.059px">e07_Silent Tears.avi</span><span class="fs" style="letter-spacing:-0.199px">267,1 MB</span><span class="fd" style="letter-spacing:-0.059px">22.05.2011 18:25:06</span></div>
<div class="fr" style="top:119px"><svg class="ic" style="left:2px;top:0px" width="16" height="16" viewBox="0 0 16 16"><use href="#avi"/></svg><span class="fn" style="letter-spacing:-0.197px">e08_Swarming Fangs.avi</span><span class="fs" style="letter-spacing:-0.199px">225,2 MB</span><span class="fd" style="letter-spacing:-0.059px">22.05.2011 18:25:16</span></div>
<div class="fr" style="top:136px"><svg class="ic" style="left:2px;top:0px" width="16" height="16" viewBox="0 0 16 16"><use href="#avi"/></svg><span class="fn" style="letter-spacing:-0.114px">e09_Furious Love.avi</span><span class="fs" style="letter-spacing:-0.199px">242,4 MB</span><span class="fd" style="letter-spacing:-0.059px">22.05.2011 18:25:25</span></div>
<div class="fr" style="top:153px"><svg class="ic" style="left:2px;top:0px" width="16" height="16" viewBox="0 0 16 16"><use href="#avi"/></svg><span class="fn" style="letter-spacing:-0.171px">e10_Blooming Darkness.avi</span><span class="fs" style="letter-spacing:-0.199px">249,4 MB</span><span class="fd" style="letter-spacing:-0.059px">22.05.2011 18:25:35</span></div>
<div class="fr" style="top:170px"><svg class="ic" style="left:2px;top:0px" width="16" height="16" viewBox="0 0 16 16"><use href="#avi"/></svg><span class="fn" style="letter-spacing:-0.146px">e11_Burning Castle.avi</span><span class="fs" style="letter-spacing:-0.199px">247,4 MB</span><span class="fd" style="letter-spacing:-0.059px">22.05.2011 18:25:45</span></div>
<div class="fr" style="top:187px"><svg class="ic" style="left:2px;top:0px" width="16" height="16" viewBox="0 0 16 16"><use href="#avi"/></svg><span class="fn" style="letter-spacing:-0.142px">e12_Infinite Future.avi</span><span class="fs" style="letter-spacing:-0.199px">243,0 MB</span><span class="fd" style="letter-spacing:-0.059px">22.05.2011 18:25:54</span></div>
   </div>
  </div>

  <div id="status">
   <div class="sp" style="left:0;width:622px;border-left:0;padding-left:4px"><span style="letter-spacing:-0.151px">Kategorien: 4, Datenträger: 4</span></div>
   <div class="sp" style="left:624px;width:620px"><span style="letter-spacing:-0.121px">Objekte: 12, Ordner: 0, Dateien: 12</span></div>
   <svg style="position:absolute;left:1249px;top:5px" width="14" height="14"><path d="M13 1L1 13M13 5L5 13M13 9L9 13" stroke="#a0a0a0" stroke-width="1"/><path d="M14 2L2 14M14 6L6 14M14 10L10 14" stroke="#fff" stroke-width="1"/></svg>
  </div>
 </div>
</div>
</body>
</html>
